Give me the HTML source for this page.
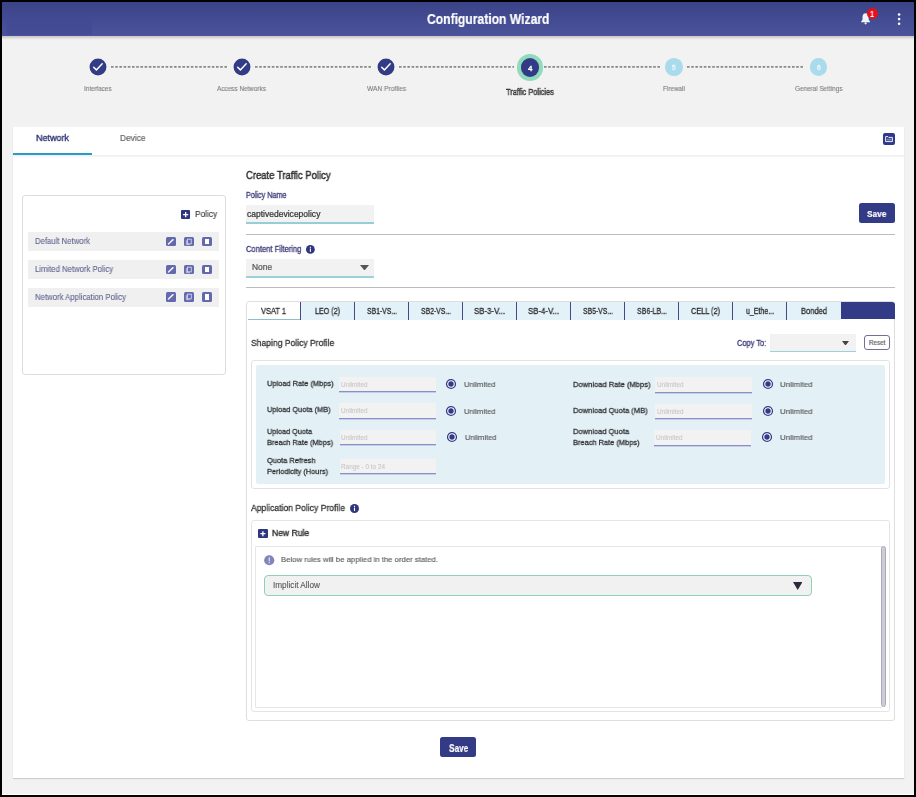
<!DOCTYPE html>
<html><head><meta charset="utf-8"><title>Configuration Wizard</title>
<style>
html,body{margin:0;padding:0;width:916px;height:797px;overflow:hidden;background:#000}
body{position:relative;font-family:"Liberation Sans",sans-serif}
.a{position:absolute}
.t{position:absolute;line-height:1;white-space:nowrap;transform-origin:0 0;will-change:transform}
</style></head><body>
<div class="a" style="left:0px;top:0px;width:916px;height:797px;background:#000"></div>
<div class="a" style="left:2px;top:2px;width:912px;height:793px;background:#f2f2f2"></div>
<div class="a" style="left:2px;top:794px;width:912px;height:1px;background:#fff"></div>
<div class="a" style="left:2px;top:2px;width:912px;height:33.6px;background:linear-gradient(#3a4288,#4b539b)"></div>
<div class="a" style="left:2px;top:35.6px;width:912px;height:4.4px;background:linear-gradient(rgba(0,0,0,0.17),rgba(0,0,0,0.14) 30%,rgba(0,0,0,0.04) 70%,rgba(0,0,0,0))"></div>
<div class="a" style="left:7px;top:14px;width:85px;height:21px;background:linear-gradient(#414992,#444c95)"></div>
<div class="t" style="left:426.50px;top:11.78px;font-size:14.24px;color:#fff;font-weight:700;transform:scaleX(0.8514);-webkit-text-stroke:0.2px #fff;">Configuration Wizard</div>
<svg class="a" style="left:860px;top:11px" width="12" height="14" viewBox="0 0 12 14"><path d="M5.6 2.2c-2 0-3.1 1.6-3.1 3.5v3L1.2 10.6v0.7h8.8v-0.7L8.7 8.7v-3c0-1.9-1.1-3.5-3.1-3.5z" fill="#eef2fa"/><circle cx="5.6" cy="12.3" r="1.1" fill="#eef2fa"/></svg>
<div class="a" style="left:866.9px;top:8.1px;width:11px;height:11px;background:#e8101a;border-radius:50%"></div>
<div class="t" style="left:870.20px;top:9.94px;font-size:8.72px;color:#fff;font-weight:700;transform:scaleX(0.8248);">1</div>
<svg class="a" style="left:895px;top:11px" width="8" height="16" viewBox="0 0 8 16"><circle cx="4.1" cy="3.5" r="1.3" fill="#fff"/><circle cx="4.1" cy="8.1" r="1.3" fill="#fff"/><circle cx="4.1" cy="12.7" r="1.3" fill="#fff"/></svg>
<svg class="a" style="left:110.7px;top:64px" width="117.3" height="6"><line x1="0" y1="2.85" x2="117.3" y2="2.85" stroke="#8a8a8a" stroke-width="1.8" stroke-dasharray="2.6 1.6"/></svg>
<svg class="a" style="left:255.0px;top:64px" width="117.0" height="6"><line x1="0" y1="2.85" x2="117.0" y2="2.85" stroke="#8a8a8a" stroke-width="1.8" stroke-dasharray="2.6 1.6"/></svg>
<svg class="a" style="left:399.0px;top:64px" width="115.0" height="6"><line x1="0" y1="2.85" x2="115.0" y2="2.85" stroke="#8a8a8a" stroke-width="1.8" stroke-dasharray="2.6 1.6"/></svg>
<svg class="a" style="left:544.0px;top:64px" width="116.4" height="6"><line x1="0" y1="2.85" x2="116.4" y2="2.85" stroke="#8a8a8a" stroke-width="1.8" stroke-dasharray="2.6 1.6"/></svg>
<svg class="a" style="left:687.4px;top:64px" width="117.3" height="6"><line x1="0" y1="2.85" x2="117.3" y2="2.85" stroke="#8a8a8a" stroke-width="1.8" stroke-dasharray="2.6 1.6"/></svg>
<svg class="a" style="left:87.5px;top:57.2px" width="20" height="20" viewBox="0 0 20 20"><circle cx="10" cy="10" r="9.1" fill="#fdfdfd"/><circle cx="10" cy="10" r="8.5" fill="#343b86"/><path d="M5.7 10.3l2.7 2.6 5.8-6.1" fill="none" stroke="#fff" stroke-width="1.5" stroke-linecap="round" stroke-linejoin="round"/></svg>
<svg class="a" style="left:231.8px;top:57.2px" width="20" height="20" viewBox="0 0 20 20"><circle cx="10" cy="10" r="9.1" fill="#fdfdfd"/><circle cx="10" cy="10" r="8.5" fill="#343b86"/><path d="M5.7 10.3l2.7 2.6 5.8-6.1" fill="none" stroke="#fff" stroke-width="1.5" stroke-linecap="round" stroke-linejoin="round"/></svg>
<svg class="a" style="left:375.8px;top:57.2px" width="20" height="20" viewBox="0 0 20 20"><circle cx="10" cy="10" r="9.1" fill="#fdfdfd"/><circle cx="10" cy="10" r="8.5" fill="#343b86"/><path d="M5.7 10.3l2.7 2.6 5.8-6.1" fill="none" stroke="#fff" stroke-width="1.5" stroke-linecap="round" stroke-linejoin="round"/></svg>
<div class="a" style="left:516.7px;top:54.400000000000006px;width:26.6px;height:26.6px;background:#8fdcbd;border-radius:50%"></div>
<div class="a" style="left:520.7px;top:58.400000000000006px;width:18.6px;height:18.6px;background:#343b86;border-radius:50%"></div>
<div class="t" style="left:527.80px;top:64.75px;font-size:7.70px;color:#fff;transform:scaleX(1.0505);-webkit-text-stroke:0.35px #fff;">4</div>
<div class="a" style="left:665.4000000000001px;top:58.2px;width:17.6px;height:17.6px;background:#a9dbec;border-radius:50%"></div>
<div class="t" style="left:672.40px;top:64.31px;font-size:6.98px;color:#eef8fc;transform:scaleX(0.9279);-webkit-text-stroke:0.3px #eef8fc;">5</div>
<div class="a" style="left:809.7px;top:58.2px;width:17.6px;height:17.6px;background:#a9dbec;border-radius:50%"></div>
<div class="t" style="left:816.70px;top:64.31px;font-size:6.98px;color:#eef8fc;transform:scaleX(0.9279);-webkit-text-stroke:0.3px #eef8fc;">6</div>
<div class="t" style="left:83.90px;top:85.73px;font-size:6.54px;color:#7c7c7c;transform:scaleX(0.9576);-webkit-text-stroke:0.1px #7c7c7c;">Interfaces</div>
<div class="t" style="left:217.20px;top:85.66px;font-size:6.69px;color:#7c7c7c;transform:scaleX(0.9538);-webkit-text-stroke:0.1px #7c7c7c;">Access Networks</div>
<div class="t" style="left:366.50px;top:85.66px;font-size:6.69px;color:#7c7c7c;transform:scaleX(0.9873);-webkit-text-stroke:0.1px #7c7c7c;">WAN Profiles</div>
<div class="t" style="left:506.20px;top:88.31px;font-size:8.58px;color:#333;transform:scaleX(0.8647);-webkit-text-stroke:0.4px #333;">Traffic Policies</div>
<div class="t" style="left:663.20px;top:85.66px;font-size:6.69px;color:#7c7c7c;transform:scaleX(0.9509);-webkit-text-stroke:0.1px #7c7c7c;">Firewall</div>
<div class="t" style="left:794.50px;top:85.66px;font-size:6.69px;color:#7c7c7c;transform:scaleX(0.9538);-webkit-text-stroke:0.1px #7c7c7c;">General Settings</div>
<div class="a" style="left:13px;top:127px;width:891px;height:651.3px;background:#fff;box-shadow:0 1px 1px rgba(0,0,0,0.15)"></div>
<div class="a" style="left:13px;top:155px;width:891px;height:3px;background:linear-gradient(rgba(0,0,0,0.07),rgba(0,0,0,0))"></div>
<div class="a" style="left:13px;top:153px;width:79px;height:2px;background:#2a9bc6"></div>
<div class="t" style="left:36.00px;top:133.40px;font-size:9.59px;color:#2a3070;transform:scaleX(0.9380);-webkit-text-stroke:0.35px #2a3070;">Network</div>
<div class="t" style="left:119.60px;top:133.40px;font-size:9.59px;color:#666;transform:scaleX(0.8697);-webkit-text-stroke:0.22px #666;">Device</div>
<div class="a" style="left:883px;top:133px;width:12px;height:12px;background:#2e388c;border-radius:2px"></div>
<svg class="a" style="left:883px;top:133px" width="12" height="12" viewBox="0 0 12 12"><path d="M2.6 3.6h2.4l0.8 0.8h3.6v4.2H2.6z" fill="none" stroke="#fff" stroke-width="0.9"/><rect x="3.6" y="5.6" width="5" height="2" fill="#fff" opacity="0.35"/></svg>
<div class="a" style="left:22px;top:195px;width:204px;height:180px;border:1px solid #dcdcdc;border-radius:3px;box-sizing:border-box"></div>
<div class="a" style="left:180.7px;top:209.8px;width:9.3px;height:9.3px;background:#2e3680;border-radius:1px"></div>
<svg class="a" style="left:180.7px;top:209.8px" width="9.3" height="9.3" viewBox="0 0 10 10"><path d="M5 2.2v5.6M2.2 5h5.6" stroke="#fff" stroke-width="1.4"/></svg>
<div class="t" style="left:194.90px;top:210.15px;font-size:9.30px;color:#3a3a3a;transform:scaleX(0.8906);-webkit-text-stroke:0.15px #3a3a3a;">Policy</div>
<div class="a" style="left:27.5px;top:232.0px;width:191.5px;height:19px;background:#f0f0f0"></div>
<div class="t" style="left:34.80px;top:236.91px;font-size:8.58px;color:#5c5f8c;transform:scaleX(0.9016);-webkit-text-stroke:0.08px #5c5f8c;">Default Network</div>
<div class="a" style="left:166.4px;top:236.7px;width:9.6px;height:9.4px;background:#6469ad;border-radius:1.5px"></div>
<svg class="a" style="left:166.4px;top:236.7px" width="9.6" height="9.4" viewBox="0 0 10 10"><path d="M2.5 7.5L7.4 2.8" stroke="#f4f4fb" stroke-width="1.5" stroke-linecap="round"/></svg>
<div class="a" style="left:184.4px;top:236.7px;width:9.6px;height:9.4px;background:#6469ad;border-radius:1.5px"></div>
<svg class="a" style="left:184.4px;top:236.7px" width="9.6" height="9.4" viewBox="0 0 10 10"><rect x="3.6" y="2.3" width="4" height="5" fill="none" stroke="#d8daf0" stroke-width="0.9"/><path d="M2.4 3.4v4.8h3.8" fill="none" stroke="#d8daf0" stroke-width="0.8"/></svg>
<div class="a" style="left:202.2px;top:236.7px;width:9.8px;height:9.4px;background:#6469ad;border-radius:1.5px"></div>
<div class="a" style="left:205.3px;top:238.7px;width:3.7px;height:5.5px;background:#fff"></div>
<div class="a" style="left:27.5px;top:259.8px;width:191.5px;height:19px;background:#f0f0f0"></div>
<div class="t" style="left:34.80px;top:264.71px;font-size:8.58px;color:#5c5f8c;transform:scaleX(0.8993);-webkit-text-stroke:0.08px #5c5f8c;">Limited Network Policy</div>
<div class="a" style="left:166.4px;top:264.5px;width:9.6px;height:9.4px;background:#6469ad;border-radius:1.5px"></div>
<svg class="a" style="left:166.4px;top:264.5px" width="9.6" height="9.4" viewBox="0 0 10 10"><path d="M2.5 7.5L7.4 2.8" stroke="#f4f4fb" stroke-width="1.5" stroke-linecap="round"/></svg>
<div class="a" style="left:184.4px;top:264.5px;width:9.6px;height:9.4px;background:#6469ad;border-radius:1.5px"></div>
<svg class="a" style="left:184.4px;top:264.5px" width="9.6" height="9.4" viewBox="0 0 10 10"><rect x="3.6" y="2.3" width="4" height="5" fill="none" stroke="#d8daf0" stroke-width="0.9"/><path d="M2.4 3.4v4.8h3.8" fill="none" stroke="#d8daf0" stroke-width="0.8"/></svg>
<div class="a" style="left:202.2px;top:264.5px;width:9.8px;height:9.4px;background:#6469ad;border-radius:1.5px"></div>
<div class="a" style="left:205.3px;top:266.5px;width:3.7px;height:5.5px;background:#fff"></div>
<div class="a" style="left:27.5px;top:287.6px;width:191.5px;height:19px;background:#f0f0f0"></div>
<div class="t" style="left:34.80px;top:292.51px;font-size:8.58px;color:#5c5f8c;transform:scaleX(0.9049);-webkit-text-stroke:0.08px #5c5f8c;">Network Application Policy</div>
<div class="a" style="left:166.4px;top:292.3px;width:9.6px;height:9.4px;background:#6469ad;border-radius:1.5px"></div>
<svg class="a" style="left:166.4px;top:292.3px" width="9.6" height="9.4" viewBox="0 0 10 10"><path d="M2.5 7.5L7.4 2.8" stroke="#f4f4fb" stroke-width="1.5" stroke-linecap="round"/></svg>
<div class="a" style="left:184.4px;top:292.3px;width:9.6px;height:9.4px;background:#6469ad;border-radius:1.5px"></div>
<svg class="a" style="left:184.4px;top:292.3px" width="9.6" height="9.4" viewBox="0 0 10 10"><rect x="3.6" y="2.3" width="4" height="5" fill="none" stroke="#d8daf0" stroke-width="0.9"/><path d="M2.4 3.4v4.8h3.8" fill="none" stroke="#d8daf0" stroke-width="0.8"/></svg>
<div class="a" style="left:202.2px;top:292.3px;width:9.8px;height:9.4px;background:#6469ad;border-radius:1.5px"></div>
<div class="a" style="left:205.3px;top:294.3px;width:3.7px;height:5.5px;background:#fff"></div>
<div class="t" style="left:246.40px;top:170.64px;font-size:10.32px;color:#2e2e2e;transform:scaleX(0.9181);-webkit-text-stroke:0.45px #2e2e2e;">Create Traffic Policy</div>
<div class="t" style="left:246.40px;top:191.83px;font-size:8.14px;color:#3a3a78;transform:scaleX(0.8887);-webkit-text-stroke:0.3px #3a3a78;">Policy Name</div>
<div class="a" style="left:246px;top:205px;width:128px;height:17.5px;background:#f2f2f2"></div>
<div class="a" style="left:246px;top:222.3px;width:128px;height:1.5px;background:#98cdd8"></div>
<div class="t" style="left:246.50px;top:210.50px;font-size:8.20px;color:#333;transform:scaleX(1.0404);-webkit-text-stroke:0.22px #333;">captivedevicepolicy</div>
<div class="a" style="left:858.5px;top:203px;width:36.5px;height:20px;background:#343b86;border-radius:2.5px"></div>
<div class="t" style="left:866.60px;top:209.06px;font-size:9.88px;color:#fff;font-weight:700;transform:scaleX(0.8448);-webkit-text-stroke:0.15px #fff;">Save</div>
<div class="a" style="left:246px;top:234px;width:649px;height:1px;background:#bcbcbc"></div>
<div class="t" style="left:246.00px;top:245.73px;font-size:8.14px;color:#3a3a78;transform:scaleX(0.9294);-webkit-text-stroke:0.3px #3a3a78;">Content Filtering</div>
<svg class="a" style="left:305.00px;top:243.90px" width="10.80" height="10.80" viewBox="0 0 10.80 10.80"><circle cx="5.40" cy="5.40" r="4.40" fill="#2e3680"/><rect x="4.85" y="2.76" width="1.1" height="1.14" fill="#fff"/><rect x="4.85" y="4.52" width="1.1" height="3.34" fill="#fff"/></svg>
<div class="a" style="left:246px;top:259px;width:128px;height:17.2px;background:#f2f2f2"></div>
<div class="a" style="left:246px;top:276.2px;width:128px;height:1.4px;background:#9cd0da"></div>
<div class="t" style="left:252.40px;top:263.48px;font-size:8.43px;color:#555;transform:scaleX(0.9924);-webkit-text-stroke:0.22px #555;">None</div>
<svg class="a" style="left:359.5px;top:264.6px" width="9" height="5.5" viewBox="0 0 9 5.5"><path d="M0 0h9L4.5 5.5z" fill="#555"/></svg>
<div class="a" style="left:246px;top:287px;width:649px;height:1px;background:#bcbcbc"></div>
<div class="a" style="left:246px;top:301px;width:649px;height:420px;border:1px solid #dedede;border-radius:3px;box-sizing:border-box"></div>
<div class="a" style="left:247px;top:302px;width:53.5px;height:17.5px;background:#fff;border-radius:3px 0 0 0"></div>
<div class="a" style="left:248px;top:318.5px;width:52.5px;height:1.1px;background:#8cbfce"></div>
<div class="a" style="left:300.5px;top:301.5px;width:54px;height:18px;background:#e3f1f8"></div>
<div class="a" style="left:299.9px;top:301.5px;width:1.2px;height:18px;background:#454b84"></div>
<div class="a" style="left:354.5px;top:301.5px;width:54px;height:18px;background:#e3f1f8"></div>
<div class="a" style="left:353.9px;top:301.5px;width:1.2px;height:18px;background:#454b84"></div>
<div class="a" style="left:408.5px;top:301.5px;width:54px;height:18px;background:#e3f1f8"></div>
<div class="a" style="left:407.9px;top:301.5px;width:1.2px;height:18px;background:#454b84"></div>
<div class="a" style="left:462.5px;top:301.5px;width:54px;height:18px;background:#e3f1f8"></div>
<div class="a" style="left:461.9px;top:301.5px;width:1.2px;height:18px;background:#454b84"></div>
<div class="a" style="left:516.5px;top:301.5px;width:54px;height:18px;background:#e3f1f8"></div>
<div class="a" style="left:515.9px;top:301.5px;width:1.2px;height:18px;background:#454b84"></div>
<div class="a" style="left:570.5px;top:301.5px;width:54px;height:18px;background:#e3f1f8"></div>
<div class="a" style="left:569.9px;top:301.5px;width:1.2px;height:18px;background:#454b84"></div>
<div class="a" style="left:624.5px;top:301.5px;width:54px;height:18px;background:#e3f1f8"></div>
<div class="a" style="left:623.9px;top:301.5px;width:1.2px;height:18px;background:#454b84"></div>
<div class="a" style="left:678.5px;top:301.5px;width:54px;height:18px;background:#e3f1f8"></div>
<div class="a" style="left:677.9px;top:301.5px;width:1.2px;height:18px;background:#454b84"></div>
<div class="a" style="left:732.5px;top:301.5px;width:54px;height:18px;background:#e3f1f8"></div>
<div class="a" style="left:731.9px;top:301.5px;width:1.2px;height:18px;background:#454b84"></div>
<div class="a" style="left:786.5px;top:301.5px;width:54px;height:18px;background:#e3f1f8"></div>
<div class="a" style="left:785.9px;top:301.5px;width:1.2px;height:18px;background:#454b84"></div>
<div class="a" style="left:840.5px;top:301.5px;width:54px;height:17.8px;background:#343b86;border-radius:0 3px 0 0"></div>
<div class="t" style="left:261.00px;top:307.11px;font-size:8.58px;color:#2b2b2b;transform:scaleX(0.8693);-webkit-text-stroke:0.3px #2b2b2b;">VSAT 1</div>
<div class="t" style="left:315.00px;top:307.11px;font-size:8.58px;color:#2b2b2b;transform:scaleX(0.8327);-webkit-text-stroke:0.3px #2b2b2b;">LEO (2)</div>
<div class="t" style="left:366.50px;top:307.11px;font-size:8.58px;color:#2b2b2b;transform:scaleX(0.7968);-webkit-text-stroke:0.3px #2b2b2b;">SB1-VS...</div>
<div class="t" style="left:420.50px;top:307.11px;font-size:8.58px;color:#2b2b2b;transform:scaleX(0.7968);-webkit-text-stroke:0.3px #2b2b2b;">SB2-VS...</div>
<div class="t" style="left:474.00px;top:307.11px;font-size:8.58px;color:#2b2b2b;transform:scaleX(0.9117);-webkit-text-stroke:0.3px #2b2b2b;">SB-3-V...</div>
<div class="t" style="left:528.00px;top:307.11px;font-size:8.58px;color:#2b2b2b;transform:scaleX(0.9117);-webkit-text-stroke:0.3px #2b2b2b;">SB-4-V...</div>
<div class="t" style="left:582.50px;top:307.11px;font-size:8.58px;color:#2b2b2b;transform:scaleX(0.7968);-webkit-text-stroke:0.3px #2b2b2b;">SB5-VS...</div>
<div class="t" style="left:636.50px;top:307.11px;font-size:8.58px;color:#2b2b2b;transform:scaleX(0.8174);-webkit-text-stroke:0.3px #2b2b2b;">SB6-LB...</div>
<div class="t" style="left:691.00px;top:307.11px;font-size:8.58px;color:#2b2b2b;transform:scaleX(0.8531);-webkit-text-stroke:0.3px #2b2b2b;">CELL (2)</div>
<div class="t" style="left:745.50px;top:307.11px;font-size:8.58px;color:#2b2b2b;transform:scaleX(0.8157);-webkit-text-stroke:0.3px #2b2b2b;">u_Ethe...</div>
<div class="t" style="left:800.50px;top:307.11px;font-size:8.58px;color:#2b2b2b;transform:scaleX(0.8794);-webkit-text-stroke:0.3px #2b2b2b;">Bonded</div>
<div class="t" style="left:251.20px;top:337.98px;font-size:9.45px;color:#333;transform:scaleX(0.9075);-webkit-text-stroke:0.3px #333;">Shaping Policy Profile</div>
<div class="t" style="left:737.00px;top:338.81px;font-size:8.58px;color:#3a3a78;transform:scaleX(0.8669);-webkit-text-stroke:0.3px #3a3a78;">Copy To:</div>
<div class="a" style="left:770.4px;top:333.7px;width:85.4px;height:17.4px;background:#f2f2f2"></div>
<div class="a" style="left:770.4px;top:351px;width:85.4px;height:1.4px;background:#9cd0da"></div>
<svg class="a" style="left:842.2px;top:340.8px" width="7" height="4.6" viewBox="0 0 7 4.6"><path d="M0 0h7L3.5 4.6z" fill="#444"/></svg>
<div class="a" style="left:864px;top:335.2px;width:26px;height:15.2px;border:1px solid #6f7094;border-radius:3px;box-sizing:border-box"></div>
<div class="t" style="left:869.00px;top:340.16px;font-size:6.69px;color:#666;transform:scaleX(0.9447);-webkit-text-stroke:0.22px #666;">Reset</div>
<div class="a" style="left:251px;top:360.2px;width:639px;height:129.3px;border:1px solid #e2e2e2;border-radius:3px;box-sizing:border-box"></div>
<div class="a" style="left:256px;top:365.3px;width:629px;height:119.2px;background:#e3f1f7;border-radius:2px"></div>
<div class="t" style="left:266.70px;top:380.20px;font-size:8.00px;color:#2e2e2e;transform:scaleX(0.9304);-webkit-text-stroke:0.28px #2e2e2e;">Upload Rate (Mbps)</div>
<div class="a" style="left:339px;top:376.9px;width:96.5px;height:14.4px;background:#f2f2f2"></div>
<div class="a" style="left:339px;top:391px;width:96.5px;height:1px;background:#8990c9"></div>
<div class="a" style="left:339px;top:392px;width:96.5px;height:0.5px;background:rgba(135,141,200,0.35)"></div>
<div class="t" style="left:340.50px;top:381.90px;font-size:6.40px;color:#c4c4c4;-webkit-text-stroke:0.05px #c4c4c4;">Unlimited</div>
<svg class="a" style="left:445px;top:377.8px" width="12" height="12" viewBox="0 0 12 12"><circle cx="6" cy="6" r="4.45" fill="#fff" stroke="#343b86" stroke-width="1.3"/><circle cx="6" cy="6" r="2.7" fill="#343b86"/></svg>
<div class="t" style="left:464.00px;top:380.70px;font-size:7.99px;color:#5e5e5e;transform:scaleX(0.9454);-webkit-text-stroke:0.18px #5e5e5e;">Unlimited</div>
<div class="t" style="left:266.70px;top:406.40px;font-size:8.00px;color:#2e2e2e;transform:scaleX(0.9214);-webkit-text-stroke:0.28px #2e2e2e;">Upload Quota (MB)</div>
<div class="a" style="left:339px;top:403.4px;width:96.5px;height:14.4px;background:#f2f2f2"></div>
<div class="a" style="left:339px;top:418px;width:96.5px;height:1px;background:#8990c9"></div>
<div class="a" style="left:339px;top:419px;width:96.5px;height:0.5px;background:rgba(135,141,200,0.35)"></div>
<div class="t" style="left:340.50px;top:408.40px;font-size:6.40px;color:#c4c4c4;-webkit-text-stroke:0.05px #c4c4c4;">Unlimited</div>
<svg class="a" style="left:445px;top:404.6px" width="12" height="12" viewBox="0 0 12 12"><circle cx="6" cy="6" r="4.45" fill="#fff" stroke="#343b86" stroke-width="1.3"/><circle cx="6" cy="6" r="2.7" fill="#343b86"/></svg>
<div class="t" style="left:464.00px;top:407.50px;font-size:7.99px;color:#5e5e5e;transform:scaleX(0.9454);-webkit-text-stroke:0.18px #5e5e5e;">Unlimited</div>
<div class="t" style="left:266.70px;top:427.90px;font-size:8.00px;color:#2e2e2e;transform:scaleX(0.9116);-webkit-text-stroke:0.28px #2e2e2e;">Upload Quota</div>
<div class="t" style="left:266.70px;top:438.90px;font-size:8.00px;color:#2e2e2e;transform:scaleX(0.9221);-webkit-text-stroke:0.28px #2e2e2e;">Breach Rate (Mbps)</div>
<div class="a" style="left:339.5px;top:429.8px;width:96.5px;height:14.4px;background:#f2f2f2"></div>
<div class="a" style="left:339.5px;top:444px;width:96.5px;height:1px;background:#8990c9"></div>
<div class="a" style="left:339.5px;top:445px;width:96.5px;height:0.5px;background:rgba(135,141,200,0.35)"></div>
<div class="t" style="left:341.00px;top:434.80px;font-size:6.40px;color:#c4c4c4;-webkit-text-stroke:0.05px #c4c4c4;">Unlimited</div>
<svg class="a" style="left:446.3px;top:431px" width="12" height="12" viewBox="0 0 12 12"><circle cx="6" cy="6" r="4.45" fill="#fff" stroke="#343b86" stroke-width="1.3"/><circle cx="6" cy="6" r="2.7" fill="#343b86"/></svg>
<div class="t" style="left:465.00px;top:434.00px;font-size:7.99px;color:#5e5e5e;transform:scaleX(0.9454);-webkit-text-stroke:0.18px #5e5e5e;">Unlimited</div>
<div class="t" style="left:266.70px;top:457.10px;font-size:8.00px;color:#2e2e2e;transform:scaleX(0.9323);-webkit-text-stroke:0.28px #2e2e2e;">Quota Refresh</div>
<div class="t" style="left:266.70px;top:468.20px;font-size:8.00px;color:#2e2e2e;transform:scaleX(0.9272);-webkit-text-stroke:0.28px #2e2e2e;">Periodicity (Hours)</div>
<div class="a" style="left:339.5px;top:458.9px;width:96.5px;height:14.4px;background:#f2f2f2"></div>
<div class="a" style="left:339.5px;top:473px;width:96.5px;height:1px;background:#8990c9"></div>
<div class="a" style="left:339.5px;top:474px;width:96.5px;height:0.5px;background:rgba(135,141,200,0.35)"></div>
<div class="t" style="left:341.00px;top:463.90px;font-size:6.40px;color:#c4c4c4;-webkit-text-stroke:0.05px #c4c4c4;">Range - 0 to 24</div>
<div class="t" style="left:572.80px;top:380.60px;font-size:8.00px;color:#2e2e2e;transform:scaleX(0.9461);-webkit-text-stroke:0.28px #2e2e2e;">Download Rate (Mbps)</div>
<div class="a" style="left:655.2px;top:377.2px;width:96.4px;height:14.4px;background:#f2f2f2"></div>
<div class="a" style="left:655.2px;top:392px;width:96.4px;height:1px;background:#8990c9"></div>
<div class="a" style="left:655.2px;top:393px;width:96.4px;height:0.5px;background:rgba(135,141,200,0.35)"></div>
<div class="t" style="left:656.70px;top:382.20px;font-size:6.40px;color:#c4c4c4;-webkit-text-stroke:0.05px #c4c4c4;">Unlimited</div>
<svg class="a" style="left:762px;top:378.2px" width="12" height="12" viewBox="0 0 12 12"><circle cx="6" cy="6" r="4.45" fill="#fff" stroke="#343b86" stroke-width="1.3"/><circle cx="6" cy="6" r="2.7" fill="#343b86"/></svg>
<div class="t" style="left:780.00px;top:381.20px;font-size:7.99px;color:#5e5e5e;transform:scaleX(0.9784);-webkit-text-stroke:0.18px #5e5e5e;">Unlimited</div>
<div class="t" style="left:572.80px;top:407.20px;font-size:8.00px;color:#2e2e2e;transform:scaleX(0.9426);-webkit-text-stroke:0.28px #2e2e2e;">Download Quota (MB)</div>
<div class="a" style="left:655.2px;top:404px;width:96.4px;height:14.4px;background:#f2f2f2"></div>
<div class="a" style="left:655.2px;top:418px;width:96.4px;height:1px;background:#8990c9"></div>
<div class="a" style="left:655.2px;top:419px;width:96.4px;height:0.5px;background:rgba(135,141,200,0.35)"></div>
<div class="t" style="left:656.70px;top:409.00px;font-size:6.40px;color:#c4c4c4;-webkit-text-stroke:0.05px #c4c4c4;">Unlimited</div>
<svg class="a" style="left:762px;top:404.8px" width="12" height="12" viewBox="0 0 12 12"><circle cx="6" cy="6" r="4.45" fill="#fff" stroke="#343b86" stroke-width="1.3"/><circle cx="6" cy="6" r="2.7" fill="#343b86"/></svg>
<div class="t" style="left:780.00px;top:407.90px;font-size:7.99px;color:#5e5e5e;transform:scaleX(0.9784);-webkit-text-stroke:0.18px #5e5e5e;">Unlimited</div>
<div class="t" style="left:572.80px;top:428.40px;font-size:8.00px;color:#2e2e2e;transform:scaleX(0.9398);-webkit-text-stroke:0.28px #2e2e2e;">Download Quota</div>
<div class="t" style="left:572.80px;top:439.40px;font-size:8.00px;color:#2e2e2e;transform:scaleX(0.9291);-webkit-text-stroke:0.28px #2e2e2e;">Breach Rate (Mbps)</div>
<div class="a" style="left:654.4px;top:430.3px;width:97px;height:14.4px;background:#f2f2f2"></div>
<div class="a" style="left:654.4px;top:445px;width:97px;height:1px;background:#8990c9"></div>
<div class="a" style="left:654.4px;top:446px;width:97px;height:0.5px;background:rgba(135,141,200,0.35)"></div>
<div class="t" style="left:655.90px;top:435.30px;font-size:6.40px;color:#c4c4c4;-webkit-text-stroke:0.05px #c4c4c4;">Unlimited</div>
<svg class="a" style="left:761.2px;top:431.4px" width="12" height="12" viewBox="0 0 12 12"><circle cx="6" cy="6" r="4.45" fill="#fff" stroke="#343b86" stroke-width="1.3"/><circle cx="6" cy="6" r="2.7" fill="#343b86"/></svg>
<div class="t" style="left:779.50px;top:434.40px;font-size:7.99px;color:#5e5e5e;transform:scaleX(0.9784);-webkit-text-stroke:0.18px #5e5e5e;">Unlimited</div>
<div class="t" style="left:251.00px;top:503.85px;font-size:9.30px;color:#333;transform:scaleX(0.9229);-webkit-text-stroke:0.3px #333;">Application Policy Profile</div>
<svg class="a" style="left:348.70px;top:502.80px" width="11.00" height="11.00" viewBox="0 0 11.00 11.00"><circle cx="5.50" cy="5.50" r="4.50" fill="#2e3680"/><rect x="4.95" y="2.80" width="1.1" height="1.17" fill="#fff"/><rect x="4.95" y="4.60" width="1.1" height="3.42" fill="#fff"/></svg>
<div class="a" style="left:251px;top:520px;width:639px;height:191.5px;border:1px solid #e4e4e4;border-radius:3px;box-sizing:border-box"></div>
<div class="a" style="left:258.1px;top:528.8px;width:9.8px;height:9.4px;background:#2e3680;border-radius:1px"></div>
<svg class="a" style="left:258.1px;top:528.8px" width="9.8" height="9.4" viewBox="0 0 10 10"><path d="M5 2.3v5.4M2.3 5h5.4" stroke="#fff" stroke-width="1.4"/></svg>
<div class="t" style="left:271.70px;top:528.59px;font-size:9.01px;color:#333;transform:scaleX(0.9523);-webkit-text-stroke:0.4px #333;">New Rule</div>
<div class="a" style="left:255px;top:545.5px;width:626.5px;height:162px;border:1px solid #e6e6e6;border-right:none;border-radius:2px 0 0 2px;box-sizing:border-box"></div>
<div class="a" style="left:880.5px;top:545.8px;width:5px;height:161px;background:#cecece;border:1px solid #a9a9c6;border-radius:2.5px;box-sizing:border-box"></div>
<svg class="a" style="left:263px;top:553.5px" width="12.5" height="12.5" viewBox="0 0 12.5 12.5"><circle cx="6.25" cy="6.25" r="5.1" fill="#8085bd"/><rect x="5.7" y="3.4" width="1.1" height="3.9" fill="#fff" opacity="0.85"/><rect x="5.7" y="8.1" width="1.1" height="1.1" fill="#fff" opacity="0.85"/></svg>
<div class="t" style="left:281.00px;top:556.08px;font-size:7.85px;color:#606060;transform:scaleX(0.9833);-webkit-text-stroke:0.16px #606060;">Below rules will be applied in the order stated.</div>
<div class="a" style="left:264.2px;top:575.2px;width:547.6px;height:21px;background:#f1f1f1;border:1px solid #8fd1b2;border-radius:4px;box-sizing:border-box"></div>
<div class="t" style="left:273.40px;top:582.33px;font-size:8.14px;color:#555;transform:scaleX(1.0089);-webkit-text-stroke:0.1px #555;">Implicit Allow</div>
<svg class="a" style="left:792.5px;top:582px" width="9.4" height="8" viewBox="0 0 9.4 8"><path d="M0 0h9.4L4.7 8z" fill="#2a2c3c"/></svg>
<div class="a" style="left:440px;top:737px;width:36px;height:20.2px;background:#343b86;border-radius:2.5px"></div>
<div class="t" style="left:448.60px;top:743.59px;font-size:10.03px;color:#fff;font-weight:700;transform:scaleX(0.8240);-webkit-text-stroke:0.15px #fff;">Save</div>
</body></html>
